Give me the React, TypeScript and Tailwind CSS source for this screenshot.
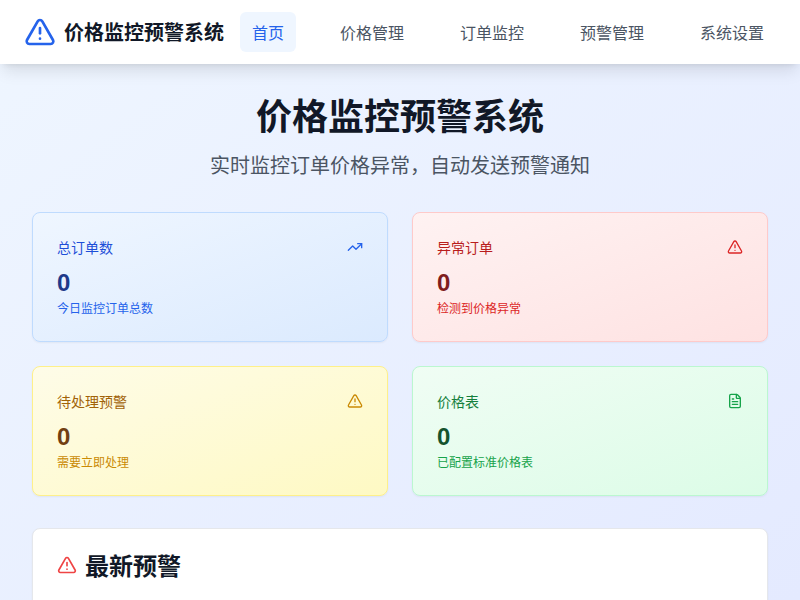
import { TrendingUp, AlertTriangle, FileText } from "lucide-react";

const cards = [
  {
    title: "总订单数",
    sub: "今日监控订单总数",
    Icon: TrendingUp,
    box: "border-[#bfdbfe] from-[#eff6ff] to-[#dbeafe]",
    titleColor: "text-[#1d4ed8]",
    valueColor: "text-[#1e3a8a]",
    subColor: "text-[#2563eb]",
    iconColor: "text-[#2563eb]",
  },
  {
    title: "异常订单",
    sub: "检测到价格异常",
    Icon: AlertTriangle,
    box: "border-[#fecaca] from-[#fef2f2] to-[#fee2e2]",
    titleColor: "text-[#b91c1c]",
    valueColor: "text-[#7f1d1d]",
    subColor: "text-[#dc2626]",
    iconColor: "text-[#dc2626]",
  },
  {
    title: "待处理预警",
    sub: "需要立即处理",
    Icon: AlertTriangle,
    box: "border-[#fef08a] from-[#fefce8] to-[#fef9c3]",
    titleColor: "text-[#a16207]",
    valueColor: "text-[#713f12]",
    subColor: "text-[#ca8a04]",
    iconColor: "text-[#ca8a04]",
  },
  {
    title: "价格表",
    sub: "已配置标准价格表",
    Icon: FileText,
    box: "border-[#bbf7d0] from-[#f0fdf4] to-[#dcfce7]",
    titleColor: "text-[#15803d]",
    valueColor: "text-[#14532d]",
    subColor: "text-[#16a34a]",
    iconColor: "text-[#16a34a]",
  },
];

const links = ["首页", "价格管理", "订单监控", "预警管理", "系统设置"];

export default function App() {
  return (
    <div className="h-screen overflow-hidden bg-gradient-to-br from-[#eff6ff] to-[#e4eaff] font-['Liberation_Sans','Noto_Sans_CJK_SC',sans-serif]">
      {/* 顶部导航 */}
      <nav className="relative z-10 flex h-16 items-center justify-between bg-white px-6 shadow-lg">
        <div className="flex items-center gap-2">
          <AlertTriangle className="h-8 w-8 text-[#2563eb]" />
          <span className="pt-0.5 text-xl font-bold text-[#111827]">价格监控预警系统</span>
        </div>
        <div className="flex gap-8">
          {links.map((link, i) => (
            <a
              key={link}
              className={`rounded-md px-3 pt-[10px] pb-[6px] text-base ${i === 0 ? "bg-[#eff6ff] text-[#2563eb]" : "text-[#4b5563]"}`}
            >
              {link}
            </a>
          ))}
        </div>
      </nav>

      <main className="px-8 py-8">
        <div className="mb-8 text-center">
          <h1 className="mb-3 text-4xl leading-[44px] font-bold text-[#111827]">价格监控预警系统</h1>
          <p className="text-xl leading-7 text-[#4b5563]">实时监控订单价格异常，自动发送预警通知</p>
        </div>

        <div className="mb-8 grid grid-cols-2 gap-6">
          {cards.map((card) => (
            <div
              key={card.title}
              className={`rounded-lg border bg-gradient-to-br p-6 shadow-xs ${card.box}`}
            >
              <div className="mb-2 flex h-[22px] items-center justify-between">
                <h3 className={`text-sm font-normal ${card.titleColor}`}>{card.title}</h3>
                <card.Icon className={`mb-0.5 h-4 w-4 ${card.iconColor}`} />
              </div>
              <div className={`mb-0.5 text-2xl leading-8 font-bold ${card.valueColor}`}>0</div>
              <p className={`text-xs leading-4 ${card.subColor}`}>{card.sub}</p>
            </div>
          ))}
        </div>

        <div className="min-h-[200px] rounded-lg border border-[#e5e7eb] bg-white p-6 shadow-xs">
          <div className="flex items-center gap-2">
            <AlertTriangle className="mb-1 h-5 w-5 text-[#ef4444]" />
            <h2 className="text-2xl leading-7 font-bold text-[#111827]">最新预警</h2>
          </div>
        </div>
      </main>
    </div>
  );
}
